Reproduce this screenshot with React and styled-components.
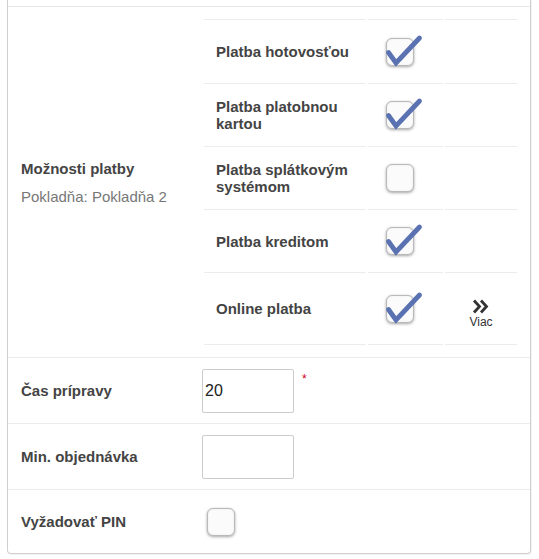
import React from 'react';
import styled, { createGlobalStyle } from 'styled-components';

const GlobalStyle = createGlobalStyle`
  body {
    margin: 0;
    background: #fff;
    font-family: "Liberation Sans", Arial, sans-serif;
  }
`;

const Page = styled.div`
  padding: 0 0 6px 7px;
`;

const Panel = styled.div`
  width: 524px;
  box-sizing: border-box;
  border: 1px solid #cfcfcf;
  border-top: none;
  border-radius: 0 0 4px 4px;
  box-shadow: 1px 1px 1px rgba(0, 0, 0, 0.05);
`;

const TopRow = styled.div`
  height: 6px;
  border-bottom: 1px solid #e8e8e8;
`;

const Row = styled.div`
  display: flex;
  align-items: center;
  box-sizing: border-box;
  height: ${({ h }) => h}px;
  border-bottom: ${({ last }) => (last ? 'none' : '1px solid #ebebeb')};
`;

const LabelCell = styled.div`
  width: 194px;
  box-sizing: border-box;
  padding-left: 13px;
  flex-shrink: 0;
`;

const Label = styled.div`
  font-weight: bold;
  font-size: 15px;
  color: #444;
  line-height: 17px;
`;

const SubLabel = styled.div`
  font-size: 15px;
  color: #777;
  line-height: 17px;
  margin-top: 11px;
`;

const OptionList = styled.div`
  display: flex;
  flex-direction: column;
  padding-left: 2px;
`;

const OptionRow = styled.div`
  display: grid;
  grid-template-columns: 162px 75px 72px;
  column-gap: 2px;
  height: ${({ h }) => h}px;
`;

const OptionCell = styled.div`
  display: flex;
  align-items: center;
  justify-content: ${({ center }) => (center ? 'center' : 'flex-start')};
  box-sizing: border-box;
  padding-left: ${({ pad }) => pad}px;
  border-top: 1px solid #ececec;
  border-bottom: ${({ last }) => (last ? '1px solid #ececec' : 'none')};
`;

const OptionText = styled.span`
  font-weight: bold;
  font-size: 15px;
  line-height: 17px;
  color: #444;
`;

const Box = styled.span`
  position: relative;
  display: inline-block;
  width: 28px;
  height: 28px;
  box-sizing: border-box;
  border: 1px solid #b9b9b9;
  border-radius: 6px;
  background: #fbfbfb;
  box-shadow: 0 1px 3px rgba(0, 0, 0, 0.35), inset 0 0 2px rgba(0, 0, 0, 0.08);
  flex-shrink: 0;
`;

const Tick = styled.svg`
  position: absolute;
  left: -1px;
  top: -5px;
  overflow: visible;
`;

const More = styled.div`
  display: flex;
  flex-direction: column;
  align-items: center;
  margin-top: 10px;
  font-size: 12px;
  color: #333;
  line-height: 13px;
`;

const MoreText = styled.span`
  margin-top: 2px;
`;

const Input = styled.input`
  width: 92px;
  height: 44px;
  box-sizing: border-box;
  border: 1px solid #cccccc;
  border-radius: 2px;
  padding: 0 2px;
  font-family: "Liberation Sans", Arial, sans-serif;
  font-size: 16px;
  color: #222;
  outline: none;
`;

const FieldWrap = styled.div`
  display: flex;
  align-items: flex-start;
  margin-left: ${({ offset }) => offset || 0}px;
`;

const Required = styled.span`
  color: #d0021b;
  font-size: 12px;
  margin-left: 8px;
  margin-top: 3px;
`;

const Checkbox = ({ checked }) => (
  <Box>
    {checked && (
      <Tick width="36" height="32" viewBox="0 0 36 32">
        <polyline
          points="2.5,18.5 10,29 33.5,4"
          fill="none"
          stroke="#5a72b1"
          strokeWidth="4.8"
          strokeLinecap="round"
          strokeLinejoin="miter"
        />
      </Tick>
    )}
  </Box>
);

const options = [
  { label: 'Platba hotovosťou', checked: true, h: 64 },
  { label: <>Platba platobnou<br />kartou</>, checked: true, h: 63 },
  { label: <>Platba splátkovým<br />systémom</>, checked: false, h: 63 },
  { label: 'Platba kreditom', checked: true, h: 63 },
  { label: 'Online platba', checked: true, h: 73, more: true },
];

export default function App() {
  return (
    <>
      <GlobalStyle />
      <Page>
        <Panel>
          <TopRow />
          <Row h={351}>
            <LabelCell>
              <Label>Možnosti platby</Label>
              <SubLabel>Pokladňa: Pokladňa 2</SubLabel>
            </LabelCell>
            <OptionList>
              {options.map((o, i) => {
                const last = i === options.length - 1;
                return (
                  <OptionRow key={i} h={o.h}>
                    <OptionCell pad={12} last={last}>
                      <OptionText>{o.label}</OptionText>
                    </OptionCell>
                    <OptionCell pad={18} last={last}>
                      <Checkbox checked={o.checked} />
                    </OptionCell>
                    <OptionCell center last={last}>
                      {o.more && (
                        <More>
                          <svg width="17" height="15" viewBox="0 0 17 15">
                            <path d="M2 1.5 L7.5 7.5 L2 13.5 M9 1.5 L14.5 7.5 L9 13.5" fill="none" stroke="#333" strokeWidth="2.8" />
                          </svg>
                          <MoreText>Viac</MoreText>
                        </More>
                      )}
                    </OptionCell>
                  </OptionRow>
                );
              })}
            </OptionList>
          </Row>
          <Row h={66}>
            <LabelCell>
              <Label>Čas prípravy</Label>
            </LabelCell>
            <FieldWrap>
              <Input defaultValue="20" />
              <Required>*</Required>
            </FieldWrap>
          </Row>
          <Row h={66}>
            <LabelCell>
              <Label>Min. objednávka</Label>
            </LabelCell>
            <FieldWrap>
              <Input defaultValue="" />
            </FieldWrap>
          </Row>
          <Row h={63} last>
            <LabelCell>
              <Label>Vyžadovať PIN</Label>
            </LabelCell>
            <FieldWrap offset={5}>
              <Checkbox checked={false} />
            </FieldWrap>
          </Row>
        </Panel>
      </Page>
    </>
  );
}
